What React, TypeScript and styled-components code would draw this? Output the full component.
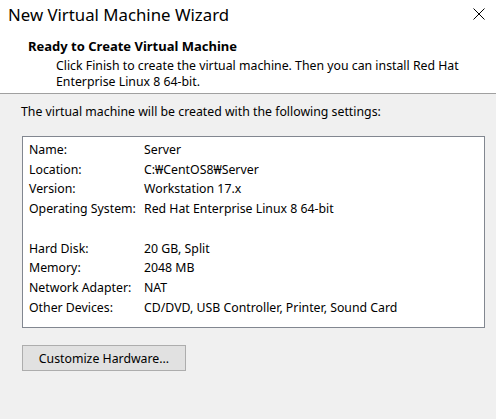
import React from "react";
import styled, { createGlobalStyle } from "styled-components";

const GlobalStyle = createGlobalStyle`
  html, body {
    margin: 0;
    padding: 0;
    background: #f0f0f0;
  }
  body {
    font-family: "Noto Sans", "Liberation Sans", sans-serif;
    font-size: 12.3px;
    color: #000;
  }
`;

const Window = styled.div`
  width: 496px;
  height: 419px;
  display: flex;
  flex-direction: column;
  background: #f0f0f0;
  overflow: hidden;
`;

const Header = styled.div`
  height: 94px;
  background: #fff;
  border-bottom: 1px solid #a0a0a0;
  display: flex;
  flex-direction: column;
  box-sizing: border-box;
`;

const TitleBar = styled.div`
  height: 30px;
  display: flex;
  align-items: center;
  justify-content: space-between;
  padding: 0 11px 0 8px;
`;

const Title = styled.div`
  font-size: 16.8px;
  color: #000;
  margin-top: -2px;
`;

const CloseButton = styled.div`
  width: 12px;
  height: 12px;
  display: flex;
  margin-top: -2px;
`;

const Heading = styled.div`
  font-weight: bold;
  font-size: 13px;
  padding-left: 28px;
  margin-top: 8px;
  line-height: 16px;
`;

const Description = styled.div`
  padding-left: 56px;
  padding-right: 16px;
  margin-top: 3.5px;
  line-height: 16.5px;
`;

const Body = styled.div`
  display: flex;
  flex-direction: column;
  padding: 10px 12px 0 21px;
`;

const Intro = styled.div`
  line-height: 16px;
`;

const SettingsBox = styled.div`
  margin-top: 16px;
  margin-left: 1px;
  width: 463px;
  height: 192px;
  box-sizing: border-box;
  border: 1px solid #828790;
  background: #fff;
  padding: 3px 6px;
  display: flex;
  flex-direction: column;
`;

const Row = styled.div<{ $gap?: boolean }>`
  display: grid;
  grid-template-columns: 115px 1fr;
  height: 19.7px;
  line-height: 19.7px;
  white-space: nowrap;
  margin-top: ${(p) => (p.$gap ? "20px" : "0")};
`;

const Button = styled.button`
  margin-top: 17px;
  margin-left: 1px;
  width: 164px;
  height: 26px;
  box-sizing: border-box;
  background: #e1e1e1;
  border: 1px solid #adadad;
  font-family: inherit;
  font-size: 12.3px;
  color: #000;
  padding: 0;
  text-align: center;
`;

const settingsTop = [
  ["Name:", "Server"],
  ["Location:", "C:\u20a9CentOS8\u20a9Server"],
  ["Version:", "Workstation 17.x"],
  ["Operating System:", "Red Hat Enterprise Linux 8 64-bit"],
];

const settingsBottom = [
  ["Hard Disk:", "20 GB, Split"],
  ["Memory:", "2048 MB"],
  ["Network Adapter:", "NAT"],
  ["Other Devices:", "CD/DVD, USB Controller, Printer, Sound Card"],
];

export default function App() {
  return (
    <Window>
      <GlobalStyle />
      <Header>
        <TitleBar>
          <Title>New Virtual Machine Wizard</Title>
          <CloseButton>
            <svg width="12" height="12" viewBox="0 0 12 12">
              <path d="M0.5 0.5 L11.5 11.5 M11.5 0.5 L0.5 11.5" stroke="#000" strokeWidth="1" />
            </svg>
          </CloseButton>
        </TitleBar>
        <Heading>Ready to Create Virtual Machine</Heading>
        <Description>
          Click Finish to create the virtual machine. Then you can install Red Hat Enterprise Linux 8 64-bit.
        </Description>
      </Header>
      <Body>
        <Intro>The virtual machine will be created with the following settings:</Intro>
        <SettingsBox>
          {settingsTop.map(([k, v]) => (
            <Row key={k}>
              <span>{k}</span>
              <span>{v}</span>
            </Row>
          ))}
          {settingsBottom.map(([k, v], i) => (
            <Row key={k} $gap={i === 0}>
              <span>{k}</span>
              <span>{v}</span>
            </Row>
          ))}
        </SettingsBox>
        <Button>Customize Hardware...</Button>
      </Body>
    </Window>
  );
}
